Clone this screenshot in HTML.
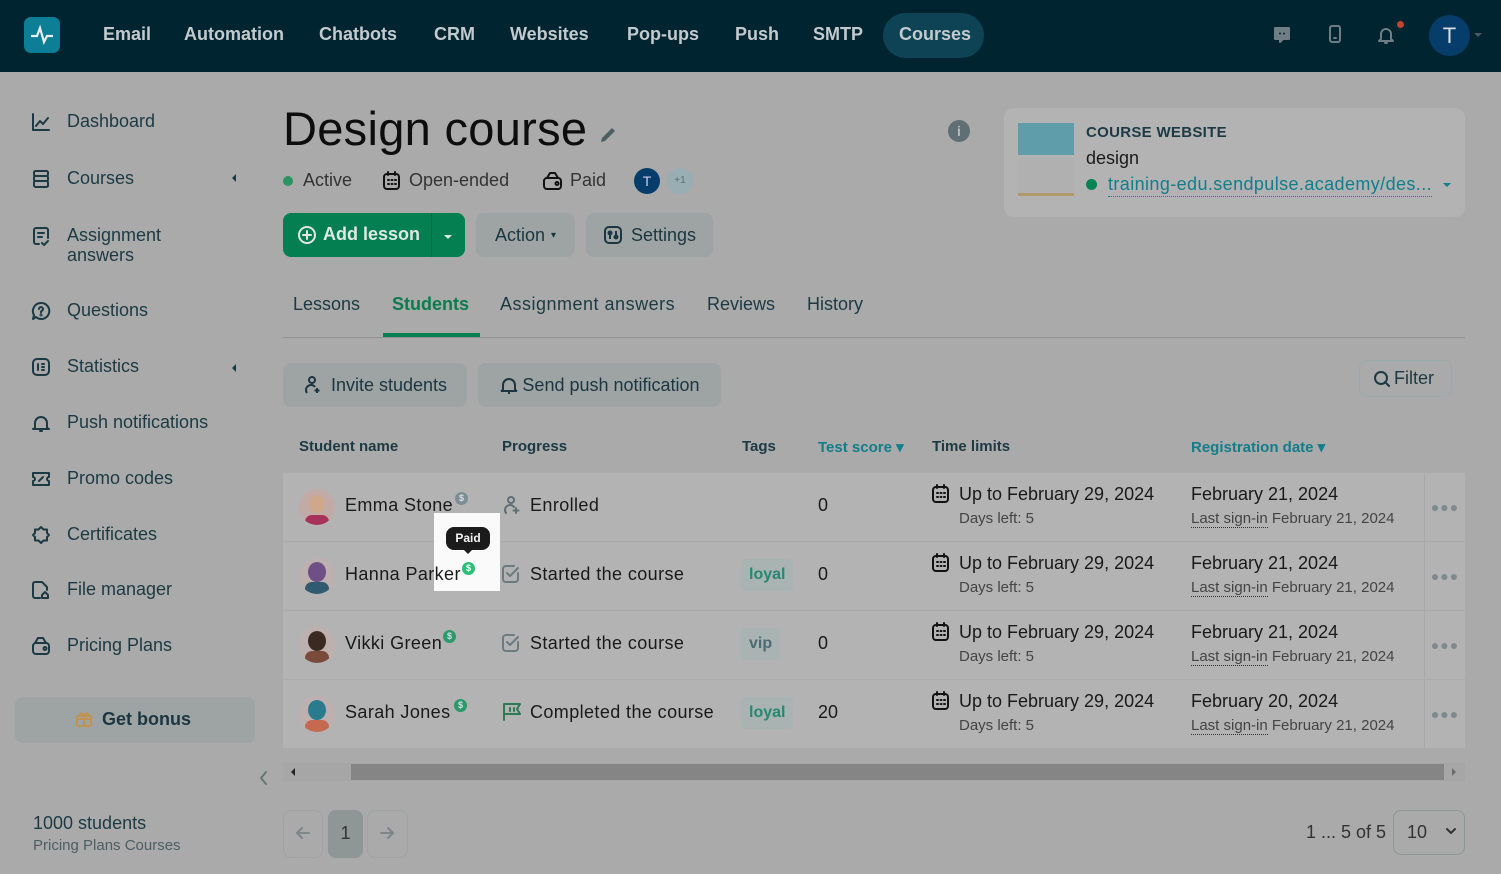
<!DOCTYPE html>
<html><head><meta charset="utf-8"><style>
*{box-sizing:border-box;margin:0;padding:0}
body{width:1501px;height:874px;overflow:hidden;background:#a9aaa9;font-family:"Liberation Sans",sans-serif;color:#111;position:relative}
.a{position:absolute;white-space:nowrap}
svg.i{position:absolute;fill:none;stroke-width:2;stroke-linecap:round;stroke-linejoin:round}
.nav{left:0;top:0;width:1501px;height:72px;background:#012431}
.nv{top:24px;font-size:18px;font-weight:bold;color:#c3cacd}
.side{font-size:18px;color:#1d3a44}
.side2 svg{stroke:#1d3a44}
.btn{background:#9ea4a4;border-radius:8px;height:44px;font-size:18px;color:#1b3640;display:flex;align-items:center;justify-content:center}
.row{left:283px;width:1182px;height:68px;background:#b3b3b3}
.dots{left:1424px;width:41px;height:68px;border-left:1px solid #a8a8a8;color:#7e8a8d;font-size:14px;text-align:center;line-height:68px;letter-spacing:1px}
.name{font-size:18px;color:#1a1a1a}
.av{width:36px;height:36px;border-radius:50%;background:#c0a8a3;overflow:hidden}
.tag{height:32px;border-radius:4px;background:#a9b3b1;color:#268773;font-weight:bold;font-size:16px;line-height:32px;padding:0 8px}
.sm{font-size:15px;color:#444}
.th{top:438px;font-size:15px;color:#1d3a44;font-weight:bold}
.dollar{width:13px;height:13px;border-radius:50%;background:#2b9a68;color:#dde;font-size:9px;text-align:center;line-height:13px;font-weight:bold}
</style></head><body>
<div class="a nav"></div>
<div class="a" style="left:24px;top:17px;width:36px;height:36px;background:#0c7e96;border-radius:7px"><svg width="36" height="36"><path d="M7 19h6l3-8 4 14 3-6h6" stroke="#e8eef0" stroke-width="2.2" fill="none"/></svg></div>
<div class="a nv" style="left:103px">Email</div>
<div class="a nv" style="left:184px">Automation</div>
<div class="a nv" style="left:319px">Chatbots</div>
<div class="a nv" style="left:434px">CRM</div>
<div class="a nv" style="left:510px">Websites</div>
<div class="a nv" style="left:627px">Pop-ups</div>
<div class="a nv" style="left:735px">Push</div>
<div class="a nv" style="left:813px">SMTP</div>
<div class="a" style="left:883px;top:13px;width:101px;height:45px;background:#0d4354;border-radius:23px"></div>
<div class="a nv" style="left:899px">Courses</div>
<svg class="i" style="left:1272px;top:25px" width="20" height="20"><path d="M3 3h14v11h-6l-3 3v-3H3z" fill="#6f7e84" stroke="#6f7e84"/><circle cx="8" cy="8.5" r="1" fill="#012431" stroke="none"/><circle cx="12" cy="8.5" r="1" fill="#012431" stroke="none"/></svg>
<svg class="i" style="left:1326px;top:24px" width="18" height="20" stroke="#6f7e84"><rect x="4" y="2" width="10" height="16" rx="2"/><path d="M8 14h2"/></svg>
<svg class="i" style="left:1376px;top:24px" width="20" height="22" stroke="#6f7e84"><path d="M5 15V10a5 5 0 0 1 10 0v5l2 2H3z"/><path d="M9 19h2"/></svg>
<div class="a" style="left:1397px;top:21px;width:7px;height:7px;background:#c2462d;border-radius:50%"></div>
<div class="a" style="left:1429px;top:15px;width:41px;height:41px;background:#063d6b;border-radius:50%;color:#d8dde0;font-size:22px;text-align:center;line-height:41px">T</div>
<div class="a" style="left:1474px;top:33px;border:4px solid transparent;border-top-color:#4c5a60"></div>

<!-- sidebar -->
<div class="a side" style="left:67px;top:111px">Dashboard</div>
<div class="a side" style="left:67px;top:168px">Courses</div>
<div class="a side" style="left:67px;top:225px;line-height:20px">Assignment<br>answers</div>
<div class="a side" style="left:67px;top:300px">Questions</div>
<div class="a side" style="left:67px;top:356px">Statistics</div>
<div class="a side" style="left:67px;top:412px">Push notifications</div>
<div class="a side" style="left:67px;top:468px">Promo codes</div>
<div class="a side" style="left:67px;top:524px">Certificates</div>
<div class="a side" style="left:67px;top:579px">File manager</div>
<div class="a side" style="left:67px;top:635px">Pricing Plans</div>
<svg class="i" style="left:31px;top:112px" width="20" height="20" stroke="#1d3a44"><path d="M2 2v16h16"/><path d="M5 14l4-5 3 3 5-6"/></svg>
<svg class="i" style="left:31px;top:169px" width="20" height="20" stroke="#1d3a44"><rect x="3" y="2" width="14" height="5" rx="1.5"/><rect x="3" y="7" width="14" height="5" rx="1.5"/><rect x="3" y="12" width="14" height="6" rx="1.5"/></svg>
<svg class="i" style="left:31px;top:226px" width="20" height="22" stroke="#1d3a44"><path d="M8 18H5a2 2 0 0 1-2-2V4a2 2 0 0 1 2-2h10a2 2 0 0 1 2 2v8"/><path d="M7 7h6M7 11h4"/><path d="M11 17l2 2 4-4"/></svg>
<svg class="i" style="left:31px;top:301px" width="20" height="20" stroke="#1d3a44"><path d="M10 2a8 8 0 1 1-5 14l-3 2 1-4A8 8 0 0 1 10 2z"/><path d="M8 8a2 2 0 1 1 2.5 2c-.5.2-.5.6-.5 1.5"/><circle cx="10" cy="14" r=".5"/></svg>
<svg class="i" style="left:31px;top:357px" width="20" height="20" stroke="#1d3a44"><rect x="2" y="2" width="16" height="16" rx="4"/><path d="M7 7v6M11 7h2M11 10h2M11 13h2"/></svg>
<svg class="i" style="left:31px;top:413px" width="20" height="20" stroke="#1d3a44"><path d="M4 15V10a6 6 0 0 1 12 0v5l2 1H2z"/><path d="M9 18h2"/></svg>
<svg class="i" style="left:31px;top:469px" width="20" height="20" stroke="#1d3a44"><path d="M2 4h16v4a2 2 0 0 0 0 4v4H2v-4a2 2 0 0 0 0-4z"/><path d="M8 12l4-4"/></svg>
<svg class="i" style="left:31px;top:525px" width="20" height="20" stroke="#1d3a44"><path d="M10 2l2.5 2.5H16v3.5l2 2-2 2v3.5h-3.5L10 18l-2.5-2.5H4V12l-2-2 2-2V4.5h3.5z"/></svg>
<svg class="i" style="left:31px;top:580px" width="20" height="20" stroke="#1d3a44"><path d="M9 18H4a2 2 0 0 1-2-2V4a2 2 0 0 1 2-2h7l5 5v3"/><path d="M11 18v-3l3-3 3 3v3z"/></svg>
<svg class="i" style="left:31px;top:636px" width="20" height="20" stroke="#1d3a44"><path d="M4 7l3-5h5l3 5"/><rect x="2" y="7" width="16" height="11" rx="3"/><circle cx="14" cy="12.5" r="1.5"/></svg>
<div class="a" style="left:232px;top:174px;border:4px solid transparent;border-right-color:#1d3a44;border-left:0"></div>
<div class="a" style="left:232px;top:364px;border:4px solid transparent;border-right-color:#1d3a44;border-left:0"></div>
<div class="a" style="left:15px;top:697px;width:240px;height:46px;background:#9ea4a4;border-radius:8px"></div>
<svg class="i" style="left:75px;top:710px" width="18" height="18" stroke="#bf9352"><rect x="2" y="6" width="14" height="10" rx="1"/><path d="M2 9h14M9 6v10M9 6C7 2 4 3 5 6M9 6c2-4 5-3 4 0"/></svg>
<div class="a" style="left:102px;top:709px;font-size:18px;font-weight:bold;color:#1b3640">Get bonus</div>
<svg class="i" style="left:258px;top:770px" width="10" height="16" stroke="#6a7577" stroke-width="1.5"><path d="M8 2L3 8l5 6"/></svg>
<div class="a" style="left:33px;top:813px;font-size:18px;color:#1d3a44">1000 students</div>
<div class="a" style="left:33px;top:837px;font-size:15px;color:#4d5e64">Pricing Plans Courses</div>

<!-- header -->
<div class="a" style="left:283px;top:101px;font-size:47px;color:#0d0d0d;letter-spacing:.3px">Design course</div>
<svg class="i" style="left:598px;top:125px" width="20" height="20"><path d="M3 17l1-4L14 3l3 3L7 16z" fill="#4d5e64"/></svg>
<div class="a" style="left:948px;top:120px;width:22px;height:22px;background:#5f6f73;border-radius:50%;color:#b6bbbc;font-weight:bold;font-size:14px;text-align:center;line-height:22px">i</div>
<div class="a" style="left:283px;top:176px;width:10px;height:10px;background:#2c9460;border-radius:50%"></div>
<div class="a" style="left:303px;top:170px;font-size:18px;color:#333">Active</div>
<svg class="i" style="left:382px;top:171px" width="20" height="20" stroke="#111"><rect x="2" y="3" width="15" height="15" rx="3"/><path d="M6 1v3M13 1v3M6 9h1M9.5 9h1M13 9h1M6 13h1M9.5 13h1M13 13h1"/></svg>
<div class="a" style="left:409px;top:170px;font-size:18px;color:#333">Open-ended</div>
<svg class="i" style="left:542px;top:171px" width="22" height="20" stroke="#111"><path d="M5 7l3-5h5l3 5"/><rect x="2" y="7" width="17" height="11" rx="3"/><circle cx="15" cy="12.5" r="1.5"/></svg>
<div class="a" style="left:570px;top:170px;font-size:18px;color:#333">Paid</div>
<div class="a" style="left:634px;top:168px;width:26px;height:26px;background:#063d6b;border-radius:50%;color:#ccd;text-align:center;line-height:26px;font-size:14px">T</div>
<div class="a" style="left:667px;top:168px;width:26px;height:26px;background:#98aeb3;border-radius:50%;color:#5a6e73;text-align:center;line-height:26px;font-size:10px">+1</div>
<div class="a" style="left:283px;top:213px;width:182px;height:44px;background:#037f51;border-radius:8px"></div>
<div class="a" style="left:431px;top:213px;width:1px;height:44px;background:#026a44"></div>
<svg class="i" style="left:296px;top:224px" width="22" height="22" stroke="#dfe8e4"><circle cx="11" cy="11" r="8"/><path d="M11 7v8M7 11h8"/></svg>
<div class="a" style="left:323px;top:224px;font-size:18px;font-weight:bold;color:#dfe8e4">Add lesson</div>
<div class="a" style="left:444px;top:235px;border:4px solid transparent;border-top-color:#dfe8e4"></div>
<div class="a btn" style="left:476px;top:213px;width:99px">Action <span style="font-size:10px;margin-left:6px">▾</span></div>
<div class="a btn" style="left:586px;top:213px;width:127px"><svg width="20" height="20" fill="none" stroke="#1b3640" stroke-width="2" style="margin-right:8px"><rect x="2" y="2" width="16" height="16" rx="4"/><path d="M7 6v8M13 6v8"/><circle cx="7" cy="8" r="1.5"/><circle cx="13" cy="12" r="1.5"/></svg>Settings</div>

<div class="a" style="left:1004px;top:108px;width:461px;height:109px;background:#b3b3b3;border-radius:10px"></div>
<div class="a" style="left:1018px;top:123px;width:56px;height:32px;background:#5f9dab"></div>
<div class="a" style="left:1018px;top:158px;width:56px;height:38px;background:#b0b0b0;border-bottom:3px solid #b09a6b"></div>
<div class="a" style="left:1086px;top:124px;font-size:15px;color:#1d3a44;font-weight:bold;letter-spacing:.3px">COURSE WEBSITE</div>
<div class="a" style="left:1086px;top:148px;font-size:18px;color:#1a1a1a">design</div>
<div class="a" style="left:1086px;top:179px;width:11px;height:11px;background:#048353;border-radius:50%"></div>
<div class="a" style="left:1108px;top:172px;font-size:18px;color:#127d8b;border-bottom:1px dotted #127d8b;line-height:24px;letter-spacing:.4px">training-edu.sendpulse.academy/des...</div>
<div class="a" style="left:1443px;top:183px;border:4px solid transparent;border-top-color:#127d8b"></div>

<!-- tabs -->
<div class="a" style="left:293px;top:294px;font-size:18px;color:#1d3a44">Lessons</div>
<div class="a" style="left:392px;top:294px;font-size:18px;color:#0c7b4f;font-weight:bold">Students</div>
<div class="a" style="left:500px;top:294px;font-size:18px;color:#1d3a44;letter-spacing:.5px">Assignment answers</div>
<div class="a" style="left:707px;top:294px;font-size:18px;color:#1d3a44">Reviews</div>
<div class="a" style="left:807px;top:294px;font-size:18px;color:#1d3a44">History</div>
<div class="a" style="left:283px;top:337px;width:1182px;height:1px;background:#8e9292"></div>
<div class="a" style="left:383px;top:333px;width:97px;height:4px;background:#037f51"></div>

<div class="a btn" style="left:283px;top:363px;width:184px"><svg width="20" height="20" fill="none" stroke="#1b3640" stroke-width="2" style="margin-right:8px"><circle cx="9" cy="5" r="3"/><path d="M4 18a5 5 0 0 1 8-6"/><path d="M14 13v5M11.5 15.5h5"/></svg>Invite students</div>
<div class="a btn" style="left:478px;top:363px;width:243px"><svg width="20" height="20" fill="none" stroke="#1b3640" stroke-width="2" style="margin-right:3px"><path d="M4 15V10a6 6 0 0 1 12 0v5l2 1H2z"/><path d="M9 18h2"/></svg>Send push notification</div>
<div class="a" style="left:1359px;top:360px;width:93px;height:37px;border:1px solid #9aa;border-radius:8px;font-size:18px;color:#1d3a44;line-height:35px;padding-left:34px">Filter</div>
<svg class="i" style="left:1372px;top:369px" width="20" height="20" stroke="#1d3a44" stroke-width="2.2"><circle cx="9" cy="9" r="6"/><path d="M13 13l4 4"/></svg>

<div class="a th" style="left:299px">Student name</div>
<div class="a th" style="left:502px">Progress</div>
<div class="a th" style="left:742px">Tags</div>
<div class="a th" style="left:818px;color:#127d8b">Test score ▾</div>
<div class="a th" style="left:932px">Time limits</div>
<div class="a th" style="left:1191px;color:#127d8b">Registration date ▾</div>

<!-- rows -->
<div class="a row" style="top:473px"></div>
<div class="a row" style="top:542px"></div>
<div class="a row" style="top:611px"></div>
<div class="a row" style="top:680px"></div>
<div class="a dots" style="top:473px">●●●</div>
<div class="a dots" style="top:542px">●●●</div>
<div class="a dots" style="top:611px">●●●</div>
<div class="a dots" style="top:680px">●●●</div>

<div class="a av" style="left:299px;top:489px;background:#c2aaa6"><div style="margin:6px 0 0 10px;width:16px;height:18px;border-radius:50%;background:#cfa78a"></div><div style="margin:2px 0 0 6px;width:24px;height:14px;border-radius:8px;background:#a8335a"></div></div>
<div class="a av" style="left:299px;top:558px;background:#bfb0b0"><div style="margin:4px 0 0 9px;width:18px;height:20px;border-radius:50%;background:#6e4f86"></div><div style="margin:0 0 0 6px;width:24px;height:14px;border-radius:8px;background:#2f5a6f"></div></div>
<div class="a av" style="left:299px;top:627px;background:#bfb0b0"><div style="margin:4px 0 0 9px;width:18px;height:20px;border-radius:50%;background:#3a2b22"></div><div style="margin:0 0 0 6px;width:24px;height:14px;border-radius:8px;background:#7a4a3a"></div></div>
<div class="a av" style="left:299px;top:696px;background:#bfb0b0"><div style="margin:4px 0 0 9px;width:18px;height:20px;border-radius:50%;background:#2b7b8f"></div><div style="margin:0 0 0 6px;width:24px;height:14px;border-radius:8px;background:#c56a4f"></div></div>
<div class="a name" style="left:345px;top:495px;letter-spacing:.4px">Emma Stone</div>
<div class="a name" style="left:345px;top:633px;letter-spacing:.4px">Vikki Green</div>
<div class="a name" style="left:345px;top:702px;letter-spacing:.4px">Sarah Jones</div>
<div class="a dollar" style="left:455px;top:492px;background:#7d8e93">$</div>
<div class="a dollar" style="left:443px;top:630px">$</div>
<div class="a dollar" style="left:454px;top:699px">$</div>

<!-- spotlight -->
<div class="a name" style="left:345px;top:564px;letter-spacing:.4px">Hanna Parker</div>
<div class="a" style="left:434px;top:513px;width:66px;height:78px;overflow:hidden;background:#fafafa"><div class="a name" style="left:-89px;top:51px;color:#1a1a1a;letter-spacing:.4px">Hanna Parker</div></div>
<div class="a" style="left:446px;top:527px;width:44px;height:23px;background:#1b1b1b;border-radius:8px;color:#f4f4f4;font-size:12px;font-weight:bold;text-align:center;line-height:23px">Paid</div>
<div class="a" style="left:464px;top:550px;border:4px solid transparent;border-top-color:#1b1b1b"></div>
<div class="a dollar" style="left:462px;top:562px;background:#2bbf7a;color:#fff">$</div>

<svg class="i" style="left:502px;top:495px" width="20" height="20" stroke="#5f6f73"><circle cx="9" cy="5" r="3"/><path d="M4 18a5 5 0 0 1 8-6"/><path d="M14 13v5M11.5 15.5h5"/></svg>
<svg class="i" style="left:501px;top:564px" width="20" height="20" stroke="#6b7b7f"><path d="M17 9v6a3 3 0 0 1-3 3H5a3 3 0 0 1-3-3V5a3 3 0 0 1 3-3h8"/><path d="M6 9l3 3 8-8"/></svg>
<svg class="i" style="left:501px;top:633px" width="20" height="20" stroke="#6b7b7f"><path d="M17 9v6a3 3 0 0 1-3 3H5a3 3 0 0 1-3-3V5a3 3 0 0 1 3-3h8"/><path d="M6 9l3 3 8-8"/></svg>
<svg class="i" style="left:501px;top:702px" width="22" height="20" stroke="#2b7b53"><path d="M3 18V2h16l-3 5 3 5H3"/><path d="M9 6v3M13 6v3"/></svg>
<div class="a name" style="left:530px;top:495px;letter-spacing:.4px">Enrolled</div>
<div class="a name" style="left:530px;top:564px;letter-spacing:.4px">Started the course</div>
<div class="a name" style="left:530px;top:633px;letter-spacing:.4px">Started the course</div>
<div class="a name" style="left:530px;top:702px;letter-spacing:.4px">Completed the course</div>
<div class="a tag" style="left:741px;top:559px">loyal</div>
<div class="a tag" style="left:741px;top:628px;color:#4c6b73">vip</div>
<div class="a tag" style="left:741px;top:697px">loyal</div>
<div class="a name" style="left:818px;top:495px">0</div>
<div class="a name" style="left:818px;top:564px">0</div>
<div class="a name" style="left:818px;top:633px">0</div>
<div class="a name" style="left:818px;top:702px">20</div>

<svg class="i" style="left:931px;top:484px" width="20" height="20" stroke="#111"><rect x="2" y="3" width="15" height="15" rx="3"/><path d="M6 1v3M13 1v3M6 9h1M9.5 9h1M13 9h1M6 13h1M9.5 13h1M13 13h1"/></svg>
<svg class="i" style="left:931px;top:553px" width="20" height="20" stroke="#111"><rect x="2" y="3" width="15" height="15" rx="3"/><path d="M6 1v3M13 1v3M6 9h1M9.5 9h1M13 9h1M6 13h1M9.5 13h1M13 13h1"/></svg>
<svg class="i" style="left:931px;top:622px" width="20" height="20" stroke="#111"><rect x="2" y="3" width="15" height="15" rx="3"/><path d="M6 1v3M13 1v3M6 9h1M9.5 9h1M13 9h1M6 13h1M9.5 13h1M13 13h1"/></svg>
<svg class="i" style="left:931px;top:691px" width="20" height="20" stroke="#111"><rect x="2" y="3" width="15" height="15" rx="3"/><path d="M6 1v3M13 1v3M6 9h1M9.5 9h1M13 9h1M6 13h1M9.5 13h1M13 13h1"/></svg>
<div class="a name" style="left:959px;top:484px">Up to February 29, 2024</div>
<div class="a name" style="left:959px;top:553px">Up to February 29, 2024</div>
<div class="a name" style="left:959px;top:622px">Up to February 29, 2024</div>
<div class="a name" style="left:959px;top:691px">Up to February 29, 2024</div>
<div class="a sm" style="left:959px;top:510px">Days left: 5</div>
<div class="a sm" style="left:959px;top:579px">Days left: 5</div>
<div class="a sm" style="left:959px;top:648px">Days left: 5</div>
<div class="a sm" style="left:959px;top:717px">Days left: 5</div>
<div class="a name" style="left:1191px;top:484px">February 21, 2024</div>
<div class="a name" style="left:1191px;top:553px">February 21, 2024</div>
<div class="a name" style="left:1191px;top:622px">February 21, 2024</div>
<div class="a name" style="left:1191px;top:691px">February 20, 2024</div>
<div class="a sm" style="left:1191px;top:510px"><span style="border-bottom:1px dotted #333">Last sign-in</span> February 21, 2024</div>
<div class="a sm" style="left:1191px;top:579px"><span style="border-bottom:1px dotted #333">Last sign-in</span> February 21, 2024</div>
<div class="a sm" style="left:1191px;top:648px"><span style="border-bottom:1px dotted #333">Last sign-in</span> February 21, 2024</div>
<div class="a sm" style="left:1191px;top:717px"><span style="border-bottom:1px dotted #333">Last sign-in</span> February 21, 2024</div>

<!-- scrollbar -->
<div class="a" style="left:283px;top:763px;width:1182px;height:18px;background:#a6a6a6"></div>
<div class="a" style="left:351px;top:764px;width:1093px;height:16px;background:#858585"></div>
<div class="a" style="left:291px;top:768px;border:4px solid transparent;border-right-color:#222;border-left:0"></div>
<div class="a" style="left:1452px;top:768px;border:4px solid transparent;border-left-color:#6b6b6b;border-right:0"></div>

<div class="a" style="left:283px;top:810px;width:40px;height:48px;border:1px solid #9fa3a3;border-radius:8px"></div>
<svg class="i" style="left:295px;top:825px" width="16" height="16" stroke="#7d8688" stroke-width="1.5"><path d="M14 8H2M7 3L2 8l5 5"/></svg>
<div class="a" style="left:328px;top:810px;width:35px;height:48px;background:#8f9696;border-radius:8px;color:#333;text-align:center;line-height:46px;font-size:18px">1</div>
<div class="a" style="left:367px;top:810px;width:41px;height:48px;border:1px solid #9fa3a3;border-radius:8px"></div>
<svg class="i" style="left:379px;top:825px" width="16" height="16" stroke="#7d8688" stroke-width="1.5"><path d="M2 8h12M9 3l5 5-5 5"/></svg>
<div class="a" style="left:1306px;top:822px;font-size:18px;color:#333">1 ... 5 of 5</div>
<div class="a" style="left:1393px;top:810px;width:72px;height:45px;border:1px solid #8f9696;border-radius:8px;font-size:18px;color:#333;line-height:43px;padding-left:13px">10</div>
<svg class="i" style="left:1445px;top:826px" width="12" height="10" stroke="#333" stroke-width="2"><path d="M2 3l4 4 4-4"/></svg>
</body></html>
